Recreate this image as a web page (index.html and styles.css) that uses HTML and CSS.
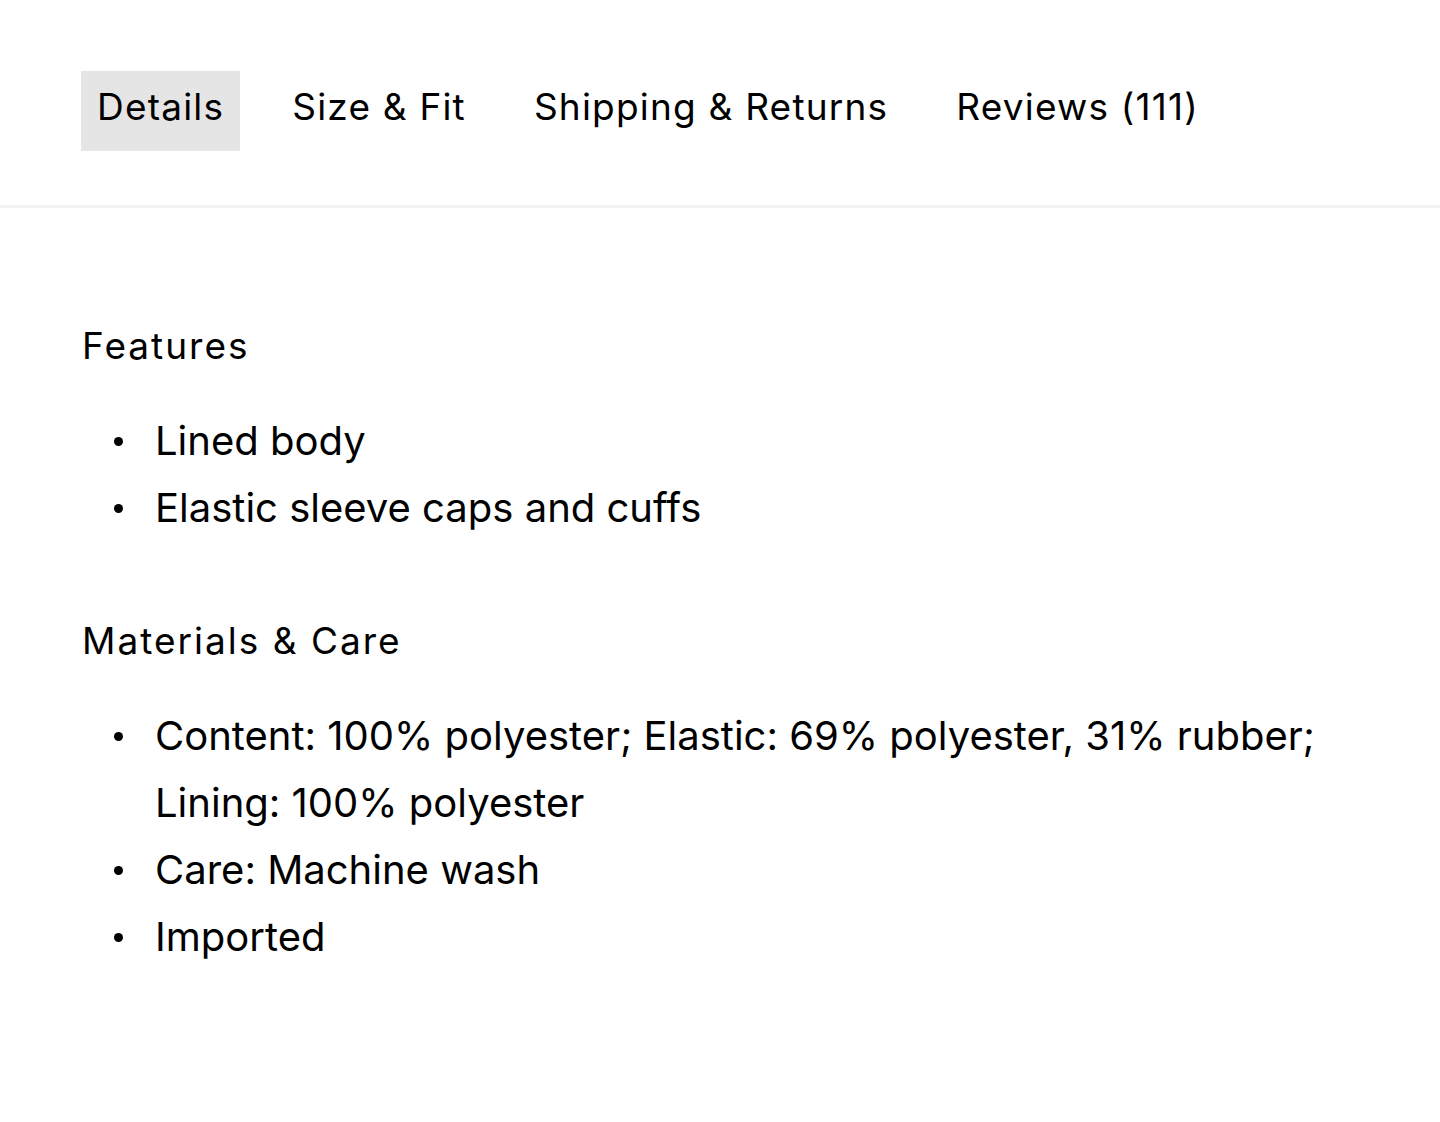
FILE: index.html
```html
<!DOCTYPE html>
<html lang="en">
<head>
<meta charset="utf-8">
<title>Product details</title>
<link rel="stylesheet" href="styles.css">
</head>
<body>
<nav class="tabs">
  <a class="tab tab-active" href="#">Details</a>
  <a class="tab" href="#">Size &amp; Fit</a>
  <a class="tab" href="#">Shipping &amp; Returns</a>
  <a class="tab" href="#">Reviews (111)</a>
</nav>
<main class="panel">
  <section class="group group-features">
    <h3 class="group-title">Features</h3>
    <ul class="group-list">
      <li>Lined body</li>
      <li>Elastic sleeve caps and cuffs</li>
    </ul>
  </section>
  <section class="group group-materials">
    <h3 class="group-title">Materials &amp; Care</h3>
    <ul class="group-list">
      <li>Content: 100% polyester; Elastic: 69% polyester, 31% rubber; Lining: 100% polyester</li>
      <li>Care: Machine wash</li>
      <li>Imported</li>
    </ul>
  </section>
</main>
</body>
</html>
```
FILE: styles.css
```css
html, body {
  margin: 0;
  padding: 0;
  background: #ffffff;
}
body {
  font-family: Inter, "Noto Sans", sans-serif;
  color: #000000;
}
.tabs {
  display: flex;
  gap: 36px;
  padding: 71px 0 54px 81px;
  border-bottom: 3px solid #f2f2f2;
}
.tab {
  display: block;
  height: 80px;
  box-sizing: border-box;
  padding: 13px 16px 0;
  font-size: 37px;
  line-height: 45px;
  letter-spacing: 1.2px;
  color: #000;
  text-decoration: none;
  white-space: nowrap;
}
.tab-active {
  background: #e5e5e5;
}
.panel {
  padding: 118px 82px 0;
}
.group-title {
  margin: 0;
  font-size: 37px;
  line-height: 40px;
  letter-spacing: 2px;
  font-weight: 400;
}
.group-list {
  margin: 41px 0 0;
  padding: 0 0 0 32px;
  list-style: none;
  font-size: 40px;
  line-height: 67px;
  max-width: 1250px;
}
.group-list li {
  display: flex;
  align-items: flex-start;
}
.group-list li::before {
  content: "";
  flex: 0 0 9px;
  width: 9px;
  height: 9px;
  margin: 30px 32px 0 0;
  border-radius: 50%;
  background: #000;
}
.group-features {
  margin-bottom: 80px;
}
```
